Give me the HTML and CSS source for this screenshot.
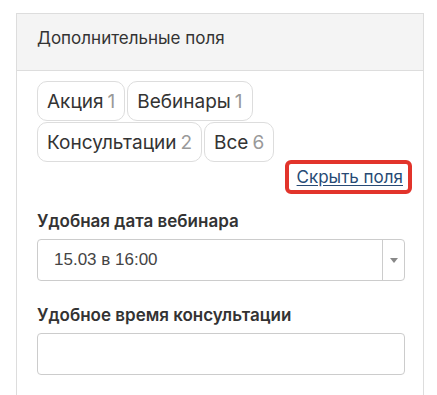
FILE: index.html
```html
<!DOCTYPE html>
<html>
<head>
    <meta charset="utf-8">
    <link rel="stylesheet" href="styles.css">
</head>
<body>
    <div class="panel">
        <div class="panel-header">Дополнительные поля</div>
        <div class="panel-body">
            <div class="tags">
                <span class="tag">Акция <span class="count">1</span></span>
                <span class="tag">Вебинары <span class="count">1</span></span>
                <span class="tag">Консультации <span class="count">2</span></span>
                <span class="tag">Все <span class="count">6</span></span>
            </div>
            <div class="toggle-row">
                <span class="highlight"><a href="#" class="toggle-link">Скрыть поля</a></span>
            </div>
            <div class="field">
                <label class="field-label">Удобная дата вебинара</label>
                <div class="select">
                    <div class="select-value">15.03 в 16:00</div>
                    <div class="select-arrow"></div>
                </div>
            </div>
            <div class="field">
                <label class="field-label">Удобное время консультации</label>
                <div class="input"></div>
            </div>
        </div>
    </div>
</body>
</html>
```

FILE: styles.css
```css
body {
    margin: 0;
    background: #fff;
    font-family: 'Inter', 'Noto Sans', sans-serif;
    color: #333;
}

.panel {
    margin: 13px 0 0 16px;
    width: 408px;
    height: 420px;
    box-sizing: border-box;
    border: 1px solid #ddd;
    border-bottom: none;
}

.panel-header {
    height: 57px;
    box-sizing: border-box;
    padding: 14px 20px 0;
    line-height: 20px;
    background: #f4f4f4;
    border-bottom: 1px solid #ddd;
    font-size: 17px;
    color: #333;
}

.panel-body {
    padding: 10px 18px 0 20px;
}

.tags {
    display: flex;
    flex-wrap: wrap;
    gap: 1px 2px;
    width: 260px;
}

.tag {
    height: 40px;
    box-sizing: border-box;
    display: inline-flex;
    align-items: center;
    padding: 0 9px;
    border: 1px solid #ddd;
    border-radius: 10px;
    font-size: 19px;
    color: #333;
}

.tag .count {
    color: #999;
    margin-left: 4px;
}

.toggle-row {
    display: flex;
    justify-content: flex-end;
    margin-top: -2px;
    margin-right: -7px;
    margin-bottom: -7px;
}

.highlight {
    display: inline-block;
    border: 4px solid #e2342b;
    border-radius: 6px;
    padding: 0 5px 0 8px;
    line-height: 26px;
}

.toggle-link {
    font-size: 17px;
    color: #274a75;
    text-decoration: underline;
    text-underline-offset: 2px;
}

.field {
    margin-top: 24px;
}

.field-label {
    display: block;
    font-size: 17px;
    line-height: 20px;
    font-weight: 600;
    color: #333;
    margin-bottom: 8px;
}

.select {
    height: 42px;
    box-sizing: border-box;
    border: 1px solid #ccc;
    border-radius: 4px;
    display: flex;
    align-items: center;
}

.select-value {
    flex: 1;
    padding-left: 16px;
    font-family: 'Liberation Sans', Arial, sans-serif;
    font-size: 17px;
    color: #444;
}

.select-arrow {
    width: 21px;
    height: 100%;
    border-left: 1px solid #ccc;
    display: flex;
    align-items: center;
    justify-content: center;
}

.select-arrow::before {
    content: '';
    border-top: 5px solid #888;
    border-left: 4px solid transparent;
    border-right: 4px solid transparent;
}

.input {
    height: 42px;
    box-sizing: border-box;
    border: 1px solid #ccc;
    border-radius: 4px;
}
```
